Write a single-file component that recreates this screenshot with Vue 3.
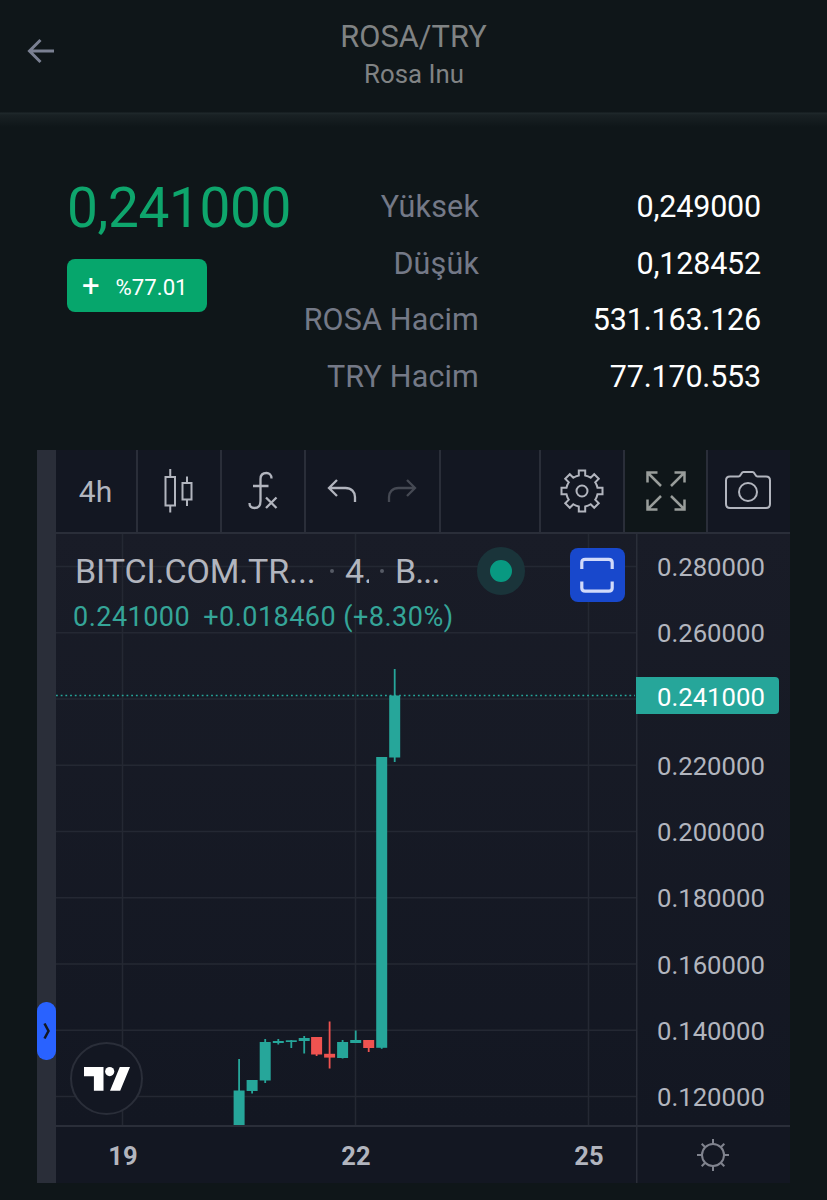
<template>
  <div class="market">
    <header class="page-header">
      <button class="back" aria-label="Geri">
        <svg width="28" height="28" viewBox="0 0 28 28">
          <path d="M27 14H2.5M13.5 3L2.5 14l11 11" />
        </svg>
      </button>
      <div class="pair">
        <h1>ROSA/TRY</h1>
        <p>Rosa Inu</p>
      </div>
    </header>

    <section class="summary">
      <div class="price-box">
        <div class="price">0,241000</div>
        <div class="change"><span class="sign">+</span><span>%77.01</span></div>
      </div>
      <dl class="stats">
        <div v-for="s in stats" :key="s.label" class="stat">
          <dt>{{ s.label }}</dt>
          <dd>{{ s.value }}</dd>
        </div>
      </dl>
    </section>

    <section class="widget">
      <div class="side">
        <button class="handle">
          <svg width="10" height="18" viewBox="0 0 10 18"><path d="M2.5 1.5L6.5 9l-4 7.5" /></svg>
        </button>
      </div>

      <div class="main">
        <div class="toolbar">
          <button class="tool interval">4h</button>
          <button class="tool candles">
            <svg width="30" height="44" viewBox="0 0 30 44">
              <path d="M1.5 8h9.5v28.500H1.5zM6.250 0v8M6.250 36.500v7M18.500 14h9v16.500h-9zM23 7.500v6.500M23 30.500v6.500" />
            </svg>
          </button>
          <button class="tool fx">
            <svg width="30" height="40" viewBox="0 0 30 40">
              <path d="M23.5 7.5C23.5 4 21 2 18.5 2c-4 0-6 2.500-6 6v22c0 4-2 7-6 7-3 0-5-2-5-5M5 15h15.500M18 26.500l10.500 10.500M28.500 26.500L18 37" />
            </svg>
          </button>
          <div class="tool history">
            <svg width="30" height="24" viewBox="0 0 30 24"><path d="M10 1L2 9l8 8M2 9h16.500c6 0 9.500 4 9.500 9v5" /></svg>
            <svg class="off" width="30" height="24" viewBox="0 0 30 24"><path d="M20 1l8 8-8 8M28 9H11.500C5.500 9 2 13 2 18v5" /></svg>
          </div>
          <div class="tool blank"></div>
          <button class="tool gear">
            <svg width="44" height="44" viewBox="-22 -22 44 44">
              <path :d="gearPath" />
              <circle r="5.5" />
            </svg>
          </button>
          <button class="tool full">
            <svg width="42" height="42" viewBox="0 0 42 42">
              <path d="M12.5 2.5H2.5v10M2.500 2.500l13.500 13.500M29.500 2.500h10v10M39.500 2.500L26 16M2.500 29.500v10h10M2.500 39.500L16 26M39.500 29.500v10h-10M39.500 39.500L26 26" />
            </svg>
          </button>
          <button class="tool camera">
            <svg width="46" height="38" viewBox="0 0 46 38">
              <path d="M5 5.500h8.500c1 0 1.500-.5 2-1.500l1-1.500C17 1.500 17.500 1 18.500 1h9c1 0 1.500.5 2 1.500l1 1.500c.5 1 1 1.500 2 1.500H41c2.500 0 4 1.500 4 4v23.500c0 2.500-1.500 4-4 4H5c-2.500 0-4-1.500-4-4V9.500c0-2.500 1.500-4 4-4z" />
              <circle cx="23" cy="21" r="9" />
            </svg>
          </button>
        </div>

        <div class="chart-row">
          <div class="chart">
            <svg class="plot" width="580" height="591" viewBox="56 534 580 591">
              <g class="grid">
                <line v-for="i in 9" :key="'h' + i" x1="56" x2="636" :y1="566.5 + (i - 1) * 66.25" :y2="566.5 + (i - 1) * 66.25" />
                <line v-for="x in [122.5, 355.5, 588.5]" :key="x" :x1="x" :x2="x" y1="534" y2="1125" />
              </g>
              <line class="last" x1="56" x2="635" y1="695.5" y2="695.5" />
              <g v-for="c in candles" :key="c.x" :class="c.down ? 'down' : 'up'">
                <rect :x="c.x - 0.9" :y="c.high" width="1.8" :height="c.low - c.high" />
                <rect :x="c.x - 5.5" :y="c.top" width="11" :height="c.bottom - c.top" />
              </g>
            </svg>

            <div class="legend">
              <div class="legend-title">
                <span class="symbol">BITCI.COM.TR...</span>
                <i></i>
                <span class="res">4.</span>
                <i></i>
                <span class="exchange">B...</span>
              </div>
              <div class="legend-values">
                <span>0.241000</span>
                <span>+0.018460 (+8.30%)</span>
              </div>
            </div>
            <div class="status"></div>
            <button class="restore">
              <svg width="34" height="36" viewBox="0 0 34 36">
                <path d="M1.8 12V5.500c0-2 1-3.200 3.500-3.200h23.400c2.500 0 3.500 1.200 3.500 3.200V12M1.800 24.500V31c0 2 1 3.200 3.500 3.200h23.400c2.500 0 3.500-1.200 3.500-3.200v-6.500" />
              </svg>
            </button>
            <div class="tv-logo">
              <svg width="46" height="24" viewBox="0 0 46 24">
                <path d="M0 0h19.500v23.700h-9.600V9.300H0zM35.800 0H46l-9.800 23.700H26z" />
                <circle cx="25.7" cy="4.6" r="4.6" />
              </svg>
            </div>
          </div>

          <div class="price-axis">
            <div v-for="p in prices" :key="p" class="tick">{{ p === '0.240000' ? '' : p }}</div>
            <div class="last-price">0.241000</div>
          </div>
        </div>

        <div class="time-row">
          <div class="time-axis">
            <span v-for="d in ['19', '22', '25']" :key="d">{{ d }}</span>
          </div>
          <div class="axis-settings">
            <svg width="34" height="34" viewBox="-17 -17 34 34">
              <circle r="11" />
              <line v-for="a in 8" :key="a" y1="-11" y2="-16" :transform="`rotate(${a * 45})`" />
            </svg>
          </div>
        </div>
      </div>
    </section>
  </div>
</template>

<script setup>
const stats = [
  { label: 'Yüksek', value: '0,249000' },
  { label: 'Düşük', value: '0,128452' },
  { label: 'ROSA Hacim', value: '531.163.126' },
  { label: 'TRY Hacim', value: '77.170.553' }
]

const prices = ['0.280000', '0.260000', '0.240000', '0.220000', '0.200000', '0.180000', '0.160000', '0.140000', '0.120000']

const candles = [
  { x: 239.1, high: 1059, top: 1090.5, bottom: 1125, low: 1125 },
  { x: 252.1, high: 1080, top: 1080, bottom: 1091, low: 1093.5 },
  { x: 265.2, high: 1039, top: 1042, bottom: 1080.5, low: 1083 },
  { x: 278.3, high: 1039, top: 1041, bottom: 1043, low: 1044.5 },
  { x: 291.3, high: 1040, top: 1040.3, bottom: 1042, low: 1048 },
  { x: 304.2, high: 1036, top: 1038, bottom: 1041, low: 1053.5 },
  { x: 316.6, high: 1037, top: 1037, bottom: 1054.5, low: 1056, down: true },
  { x: 329.6, high: 1021.5, top: 1053.8, bottom: 1057.6, low: 1068.5, down: true },
  { x: 342.6, high: 1040, top: 1042, bottom: 1058, low: 1058.5 },
  { x: 355.7, high: 1030.5, top: 1040, bottom: 1043, low: 1043 },
  { x: 368.7, high: 1040, top: 1040, bottom: 1048, low: 1052, down: true },
  { x: 381.7, high: 757, top: 757, bottom: 1047.8, low: 1048.8 },
  { x: 394.7, high: 669, top: 695.5, bottom: 757.5, low: 762 }
]

// outline of an eight-toothed wheel, the body is an arc between teeth
const gearPath = (() => {
  let d = ''
  for (let i = 0; i < 8; i++) {
    const a = (i * Math.PI) / 4
    const at = (u, v) => `${(u * Math.cos(a) + v * Math.sin(a)).toFixed(2)} ${(u * Math.sin(a) - v * Math.cos(a)).toFixed(2)}`
    d += `${i ? 'A15.8 15.8 0 0 1 ' : 'M'}${at(-3.2, 15.5)}L${at(-3.2, 20.5)}L${at(3.2, 20.5)}L${at(3.2, 15.5)}`
  }
  return d + 'A15.8 15.8 0 0 1 -3.2 -15.5Z'
})()
</script>

<style>
body { background: #0f1619; }
</style>

<style scoped>
.market { width: 827px; height: 1200px; overflow: hidden; background: #0f1619; font-family: Roboto, "Liberation Sans", sans-serif; }
.market * { box-sizing: border-box; }
button { padding: 0; border: 0; background: none; font: inherit; color: inherit; }
svg { display: block; fill: none; }

.page-header {
  display: grid; grid-template-columns: 56px 1fr 56px; height: 130px;
  background: linear-gradient(#0f1619 112px, #20292c 113px, #192124 115px, #0f1619 127px);
}
.back { height: 28px; margin: 37px 0 0 27px; width: 28px; }
.back svg { stroke: #7a8092; stroke-width: 3; }
.pair { text-align: center; color: #808384; padding-top: 19px; }
.pair h1 { margin: 0; font-size: 30.8px; font-weight: 400; line-height: 36px; }
.pair p { margin: 3px 0 0; padding-left: 1px; font-size: 25.8px; line-height: 32px; }

.summary { display: flex; justify-content: space-between; height: 320px; padding: 48px 67px 0; }
.price-box { width: 225px; }
.price { font-size: 55px; line-height: 60px; letter-spacing: -0.4px; color: #0ea56c; white-space: nowrap; }
.change {
  display: flex; align-items: center; gap: 16px; width: 140px; height: 53px; margin-top: 21px; padding: 2px 0 0 15px;
  border-radius: 8px; background: #06a66c; color: #fff; font-size: 22.2px;
}
.sign { font-size: 31px; font-weight: 400; margin-top: -3px; }
.stats { margin: 0; padding-top: 1px; }
.stat { display: flex; justify-content: flex-end; height: 56.5px; line-height: 55.4px; font-size: 30.5px; white-space: nowrap; }
.stat dt { color: #747987; letter-spacing: 0.15px; }
.stat dd { width: 282px; margin: 0 -1px 0 0; text-align: right; letter-spacing: -0.2px; color: #fff; }

.widget { display: flex; width: 753px; height: 733px; margin-left: 37px; }
.side { display: flex; align-items: flex-start; width: 19px; background: #2a2e39; }
.handle { display: flex; align-items: center; justify-content: center; width: 19px; height: 58px; margin-top: 552px; border-radius: 9px; background: #2962ff; }
.handle svg { stroke: #131722; stroke-width: 2.5; }
.main { width: 734px; background: #131722; }

.toolbar { display: flex; height: 84px; border-bottom: 2px solid #2a2e39; color: #b2b5be; }
.tool { display: flex; align-items: center; justify-content: center; border-right: 2px solid #2a2e39; }
.tool svg { stroke: #b2b5be; stroke-width: 2; }
.interval { width: 82px; font-size: 30px; padding-right: 1px; }
.candles { width: 84px; }
.fx { width: 84px; }
.fx svg { stroke-width: 2.3; }
.history { width: 135px; gap: 30px; padding-right: 2px; }
.history svg { stroke-width: 2.3; }
.history .off { stroke: #454953; }
.blank { width: 100px; }
.gear { width: 84px; padding-right: 1px; }
.full { width: 83px; background: #0f1619; }
.full svg { stroke: #999d9b; stroke-width: 2.5; margin-left: 1px; }
.camera { flex: 1; border-right: 0; padding: 0 2px 2px 0; }

.chart-row { display: flex; height: 591px; background: linear-gradient(#191c27, #131722); }
.chart { position: relative; width: 580px; }
.grid line { stroke: #242833; stroke-width: 1.5; }
.last { stroke: #26a69a; stroke-width: 1.7; stroke-dasharray: 1.8 2.9; }
.up { fill: #26a69a; }
.down { fill: #ef5350; }

.legend { position: absolute; left: 19px; top: 16px; white-space: nowrap; }
.legend-title { display: flex; align-items: center; height: 42px; font-size: 34px; color: #b2b5be; }
.symbol { width: 255px; letter-spacing: -0.12px; }
.legend-title i { width: 4px; height: 4px; border-radius: 50%; background: #565a65; }
.res { width: 24px; margin: 0 11px; overflow: hidden; }
.exchange { margin-left: 11px; letter-spacing: -0.9px; }
.legend-values { display: flex; gap: 13px; margin: 8px 0 0 -2px; font-size: 27px; line-height: 34px; letter-spacing: 0.48px; color: #35a598; }
.status { position: absolute; left: 421px; top: 13px; width: 48px; height: 48px; border: 13px solid #1a343a; border-radius: 50%; background: #089981; }
.restore { position: absolute; left: 514px; top: 14px; display: flex; align-items: center; justify-content: center; width: 55px; height: 54px; padding-right: 2px; border-radius: 8px; background: #1848cc; }
.restore svg { stroke: #d1dafa; stroke-width: 3.2; }
.tv-logo { position: absolute; left: 14px; top: 508px; display: flex; align-items: center; justify-content: center; width: 73px; height: 73px; border: 2px solid #2a2e39; border-radius: 50%; background: #131722; }
.tv-logo svg { fill: #fff; }

.price-axis { position: relative; width: 154px; box-shadow: inset 1.5px 0 #2a2e39; overflow: hidden; color: #b2b5be; font-size: 25.7px; }
.tick { height: 66.25px; padding-left: 21px; line-height: 66.5px; }
.last-price { position: absolute; left: 0; top: 143px; width: 143px; height: 37px; padding-left: 21px; border-radius: 0 4px 4px 0; background: #26a69a; color: #fff; line-height: 40px; }

.time-row { display: flex; height: 58px; border-top: 2px solid #2a2e39; }
.time-axis { display: flex; justify-content: space-between; align-items: center; width: 580px; padding: 2px 27px 0 47px; font-size: 25.5px; font-weight: 700; color: #b2b5be; }
.time-axis span { width: 40px; text-align: center; }
.axis-settings { display: flex; align-items: center; justify-content: center; flex: 1; box-shadow: inset 1.5px 0 #2a2e39; }
.axis-settings svg { stroke: #80838e; stroke-width: 2; }
</style>
